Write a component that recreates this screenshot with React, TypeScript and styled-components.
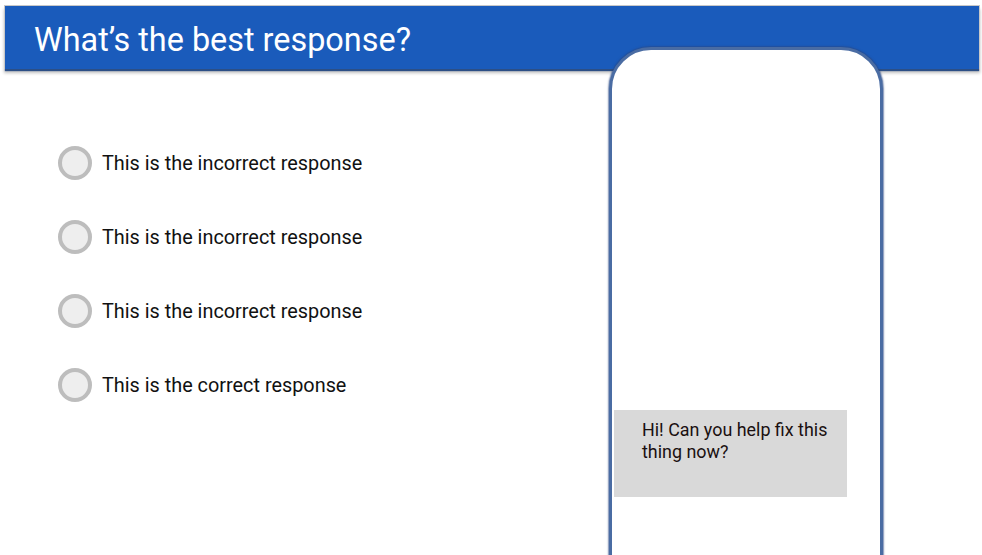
import styled, { createGlobalStyle } from "styled-components";

const GlobalStyle = createGlobalStyle`
  html, body {
    margin: 0;
    padding: 0;
    background: #ffffff;
    font-family: Roboto, "Liberation Sans", Arial, sans-serif;
    overflow: hidden;
  }
`;

const Stage = styled.div`
  width: 982px;
  height: 555px;
  overflow: hidden;
  display: grid;
  grid-template-columns: 4px 605px 274px 1fr 2px;
  grid-template-rows: 5px 64px 1fr;
`;

const Header = styled.header`
  grid-column: 2 / 5;
  grid-row: 2;
  display: flex;
  align-items: center;
  padding-left: 29px;
  background: #1a5bbb;
  border: 1px solid #c8c8c8;
  border-bottom: none;
  box-shadow: 0 3px 1px -1px #2c4f86, 0 4px 3px rgba(0, 0, 0, 0.25);
  z-index: 1;
`;

const Title = styled.h1`
  margin: 0;
  padding-top: 4px;
  color: #ffffff;
  font-size: 32.4px;
  font-weight: 400;
`;

const Options = styled.div`
  grid-column: 2;
  grid-row: 3;
  display: flex;
  flex-direction: column;
  gap: 40px;
  padding: 77px 0 0 54px;
`;

const Option = styled.label`
  display: flex;
  align-items: center;
  gap: 10px;
  height: 34px;
  font-size: 19.85px;
  color: #111111;
  cursor: pointer;
`;

const Radio = styled.span`
  width: 26px;
  height: 26px;
  border-radius: 50%;
  border: 4px solid #bdbdbd;
  background: #eeeeee;
  flex-shrink: 0;
`;

const Phone = styled.div`
  grid-column: 3;
  grid-row: 2 / 4;
  margin-top: 42px;
  height: 600px;
  box-sizing: border-box;
  border: 3px solid #4a6ca3;
  border-radius: 42px;
  background: #ffffff;
  box-shadow: 0 0 1.5px 0.5px rgba(40, 70, 130, 0.6);
  z-index: 2;
  padding: 360px 33px 0 2px;
`;

const Bubble = styled.div`
  height: 87px;
  box-sizing: border-box;
  background: #d9d9d9;
  padding: 9px 14px 0 28px;
  font-size: 17.9px;
  line-height: 22px;
  color: #1a1010;
`;

const options = [
  "This is the incorrect response",
  "This is the incorrect response",
  "This is the incorrect response",
  "This is the correct response",
];

export default function App() {
  return (
    <>
      <GlobalStyle />
      <Stage>
        <Header>
          <Title>What’s the best response?</Title>
        </Header>
        <Options>
          {options.map((text, i) => (
            <Option key={i}>
              <Radio />
              {text}
            </Option>
          ))}
        </Options>
        <Phone>
          <Bubble>Hi! Can you help fix this thing now?</Bubble>
        </Phone>
      </Stage>
    </>
  );
}
